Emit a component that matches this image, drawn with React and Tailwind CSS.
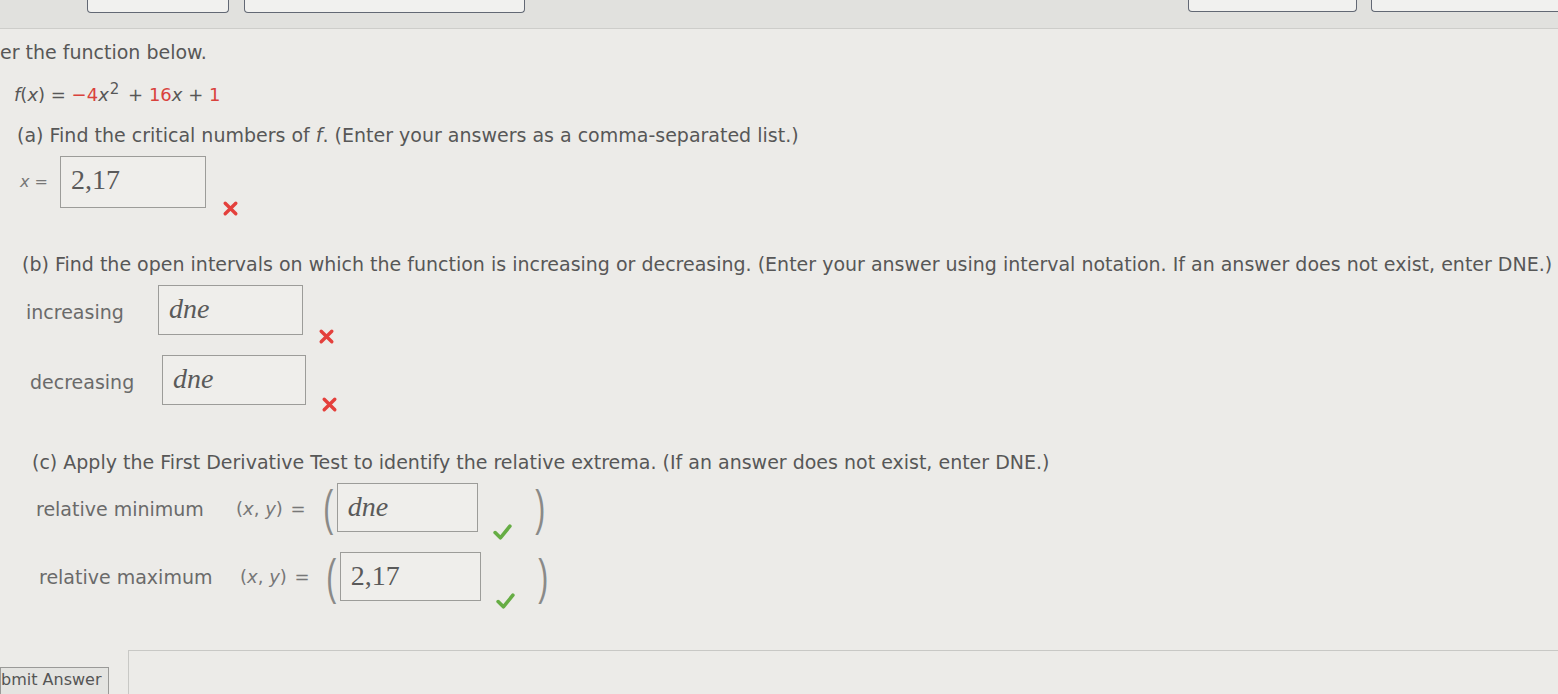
import React from "react";

const XMark = () => (
  <svg className="w-[17px] h-[17px]" viewBox="0 0 16 16">
    <path d="M3 3l10 10M13 3L3 13" stroke="#e4403c" strokeWidth={3.2} strokeLinecap="round" />
  </svg>
);

const Check = () => (
  <svg className="w-[19px] h-[17px]" viewBox="0 0 18 16">
    <path d="M2 9l5 5L16 3" fill="none" stroke="#66ad44" strokeWidth={3.4} strokeLinecap="round" strokeLinejoin="round" />
  </svg>
);

const Box = ({ w, h, children, italic }) => (
  <div
    className={`shrink-0 border border-[#9c9c99] bg-[#efeeeb] pl-[10px] pt-[7px] font-['Liberation_Serif',serif] text-[28px] leading-[32px] text-[#5a5a5a] ${italic ? "italic" : ""}`}
    style={{ width: w, height: h }}
  >
    {children}
  </div>
);

const Paren = ({ children }) => (
  <span className="font-['Liberation_Sans',sans-serif] text-[50px] leading-[50px] font-thin text-[#8a8a88] scale-x-[0.6] inline-block">
    {children}
  </span>
);

export default function App() {
  return (
    <div className="w-[1558px] h-[694px] overflow-hidden bg-[#ecebe8] font-['DejaVu_Sans',sans-serif] text-[19px] text-[#575757]">
      {/* top toolbar */}
      <div className="h-[29px] bg-[#e1e1de] border-b border-[#cdcdca] flex items-start">
        <div className="ml-[87px] w-[142px] h-[13px] border-x border-b border-[#626874] rounded-b-[4px] bg-[#f1f1ef]" />
        <div className="ml-[15px] w-[281px] h-[13px] border-x border-b border-[#626874] rounded-b-[4px] bg-[#f1f1ef]" />
        <div className="ml-auto w-[169px] h-[12px] border-x border-b border-[#626874] rounded-b-[4px] bg-[#f1f1ef]" />
        <div className="ml-[14px] w-[190px] h-[12px] border-l border-b border-[#626874] rounded-bl-[4px] bg-[#f1f1ef] -mr-[3px]" />
      </div>

      <div className="flex flex-col">
        <p className="mt-[13px] leading-[20px] whitespace-nowrap">er the function below.</p>

        <p className="mt-[23px] ml-[14px] leading-[20px] text-[18px] whitespace-nowrap">
          <span className="italic">f</span>(<span className="italic">x</span>) = <span className="text-[#d9423c]">−4</span>
          <span className="italic">x</span>
          <sup className="text-[15px] ml-[1px] mr-[3px]">2</sup> + <span className="text-[#d9423c]">16</span>
          <span className="italic">x</span> + <span className="text-[#d9423c]">1</span>
        </p>

        <p className="mt-[20px] ml-[17px] leading-[20px] whitespace-nowrap">
          (a) Find the critical numbers of <span className="italic">f</span>. (Enter your answers as a comma-separated list.)
        </p>

        <div className="mt-[11px] ml-[20px] h-[52px] flex items-start">
          <span className="mt-[16px] w-[40px] text-[16px] leading-[20px] text-[#777] whitespace-nowrap">
            <span className="italic">x</span> =
          </span>
          <Box w={146} h={52}>2,17</Box>
          <div className="mt-[44px] ml-[16px]">
            <XMark />
          </div>
        </div>

        <p className="mt-[46px] ml-[22px] leading-[20px] whitespace-nowrap">
          (b) Find the open intervals on which the function is increasing or decreasing. (Enter your answer using interval notation. If an answer does not exist, enter DNE.)
        </p>

        <div className="mt-[11px] ml-[26px] h-[50px] flex items-start">
          <span className="mt-[17px] w-[132px] leading-[20px] text-[#6a6a6a]">increasing</span>
          <Box w={145} h={50} italic>dne</Box>
          <div className="mt-[43px] ml-[15px]">
            <XMark />
          </div>
        </div>

        <div className="mt-[20px] ml-[30px] h-[50px] flex items-start">
          <span className="mt-[17px] w-[132px] leading-[20px] text-[#6a6a6a]">decreasing</span>
          <Box w={144} h={50} italic>dne</Box>
          <div className="mt-[41px] ml-[15px]">
            <XMark />
          </div>
        </div>

        <p className="mt-[47px] ml-[32px] leading-[20px] whitespace-nowrap">
          (c) Apply the First Derivative Test to identify the relative extrema. (If an answer does not exist, enter DNE.)
        </p>

        <div className="mt-[11px] ml-[36px] h-[49px] flex items-start">
          <span className="mt-[16px] w-[200px] leading-[20px] text-[#6a6a6a] whitespace-nowrap">relative minimum</span>
          <span className="mt-[16px] w-[84px] text-[18px] leading-[20px] text-[#777] whitespace-nowrap">
            (<span className="italic">x</span>, <span className="italic">y</span>) <span className="ml-[2px]">=</span>
          </span>
          <Paren>(</Paren>
          <Box w={141} h={49} italic>dne</Box>
          <div className="mt-[40px] ml-[15px]">
            <Check />
          </div>
          <span className="ml-[20px]">
            <Paren>)</Paren>
          </span>
        </div>

        <div className="mt-[20px] ml-[39px] h-[49px] flex items-start">
          <span className="mt-[15px] w-[201px] leading-[20px] text-[#6a6a6a] whitespace-nowrap">relative maximum</span>
          <span className="mt-[15px] w-[83px] text-[18px] leading-[20px] text-[#777] whitespace-nowrap">
            (<span className="italic">x</span>, <span className="italic">y</span>) <span className="ml-[2px]">=</span>
          </span>
          <Paren>(</Paren>
          <Box w={141} h={49}>2,17</Box>
          <div className="mt-[40px] ml-[15px]">
            <Check />
          </div>
          <span className="ml-[20px]">
            <Paren>)</Paren>
          </span>
        </div>

        <div className="mt-[49px] flex items-start">
          <div className="mt-[17px] w-[109px] h-[30px] border border-[#9a9a98] bg-[#e4e4e1] text-[#555] text-[16px] leading-[24px] whitespace-nowrap overflow-hidden">
            bmit Answer
          </div>
          <div className="ml-[19px] flex-1 h-[60px] border-t border-l border-[#c8c8c5]" />
        </div>
      </div>
    </div>
  );
}
